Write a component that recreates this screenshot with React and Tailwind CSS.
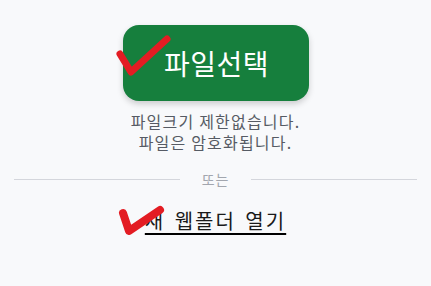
import React from "react";

export default function App() {
  return (
    <div
      className="w-[431px] h-[286px] bg-[#f8f9fb] flex flex-col items-center px-[14px] pt-[25px]"
      style={{ fontFamily: '"Noto Sans CJK KR", "Noto Sans", sans-serif' }}
    >
      <div className="relative">
        <button className="w-[186px] h-[76px] rounded-[16px] bg-[#167f3d] text-white text-[28px] leading-none tracking-[0.5px] shadow-[0_3px_6px_rgba(0,0,0,0.18)] flex items-center justify-center pl-[2px]">
          파일선택
        </button>
        <svg
          className="absolute left-[-10px] top-[7px]"
          width="60"
          height="50"
          viewBox="0 0 60 50"
        >
          <polyline
            points="7,22 18,40 54,7"
            fill="none"
            stroke="#e31c23"
            strokeWidth="7"
            strokeLinecap="round"
            strokeLinejoin="round"
          />
        </svg>
      </div>
      <div className="mt-[10px] text-[16px] leading-[21px] tracking-[1.2px] text-[#565b64] text-center">
        <div>파일크기 제한없습니다.</div>
        <div>파일은 암호화됩니다.</div>
      </div>
      <div className="mt-[16px] w-full flex items-center">
        <div className="flex-1 h-px bg-[#d4d6dc]" />
        <span className="px-[22px] text-[14px] leading-[20px] tracking-[1px] text-[#a2a6ae]">또는</span>
        <div className="flex-1 h-px bg-[#d4d6dc]" />
      </div>
      <div className="mt-[18px] relative">
        <span className="text-[20px] leading-[28px] tracking-[2px] [word-spacing:3px] text-[#1a1a1a] underline decoration-2 underline-offset-[4px] decoration-black">
          새 웹폴더 열기
        </span>
        <svg
          className="absolute left-[-28px] top-[-2px]"
          width="50"
          height="35"
          viewBox="0 0 50 35"
        >
          <polyline
            points="6,8 12,26 43,5"
            fill="none"
            stroke="#e31c23"
            strokeWidth="8"
            strokeLinecap="round"
            strokeLinejoin="round"
          />
        </svg>
      </div>
    </div>
  );
}
